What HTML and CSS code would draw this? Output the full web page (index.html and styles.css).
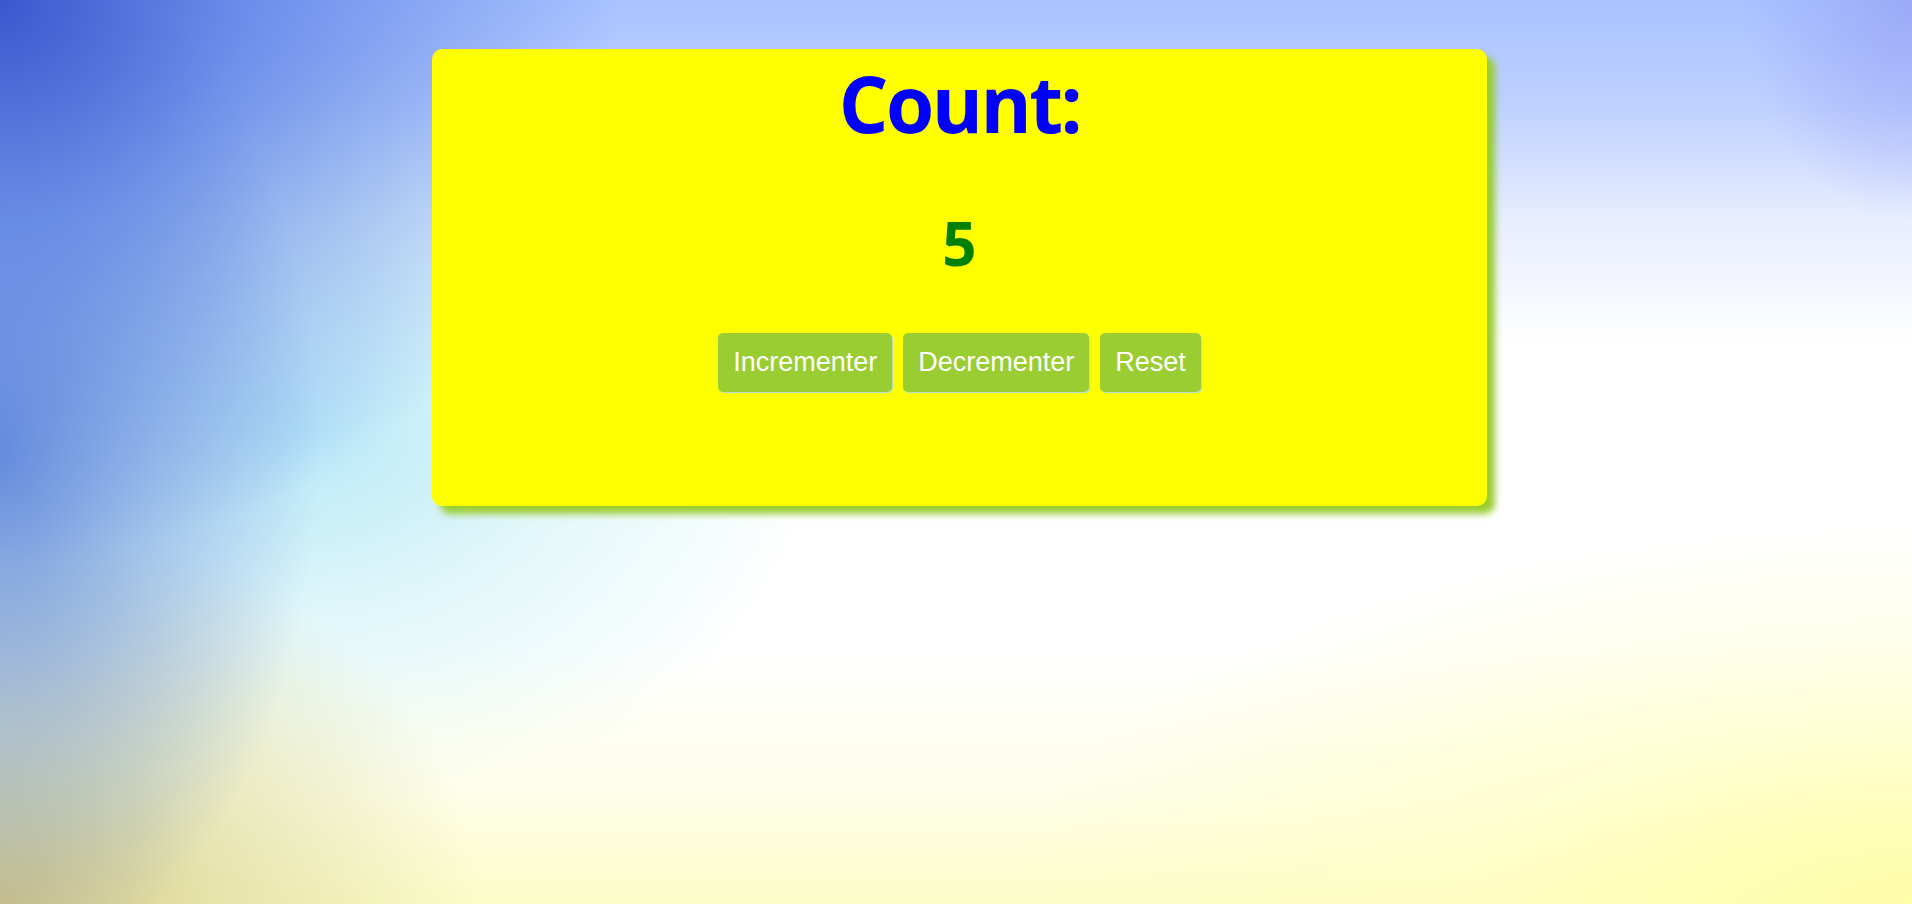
FILE: index.html
```html
<!DOCTYPE html>
<html lang="fr">
<head>
<meta charset="utf-8">
<title>Counter</title>
<link rel="stylesheet" href="styles.css">
</head>
<body>
<main class="card">
  <h1 class="title">Count:</h1>
  <p class="value">5</p>
  <div class="actions">
    <button class="btn">Incrementer</button>
    <button class="btn">Decrementer</button>
    <button class="btn">Reset</button>
  </div>
</main>
</body>
</html>
```

FILE: styles.css
```css
html, body {
  margin: 0;
  padding: 0;
}
body {
  min-height: 100vh;
  overflow: hidden;
  font-family: "Open Sans", "Noto Sans", sans-serif;
  background:
    radial-gradient(ellipse 620px 560px at 0% 0%, rgba(58, 88, 206, 1) 0%, rgba(80, 120, 226, 0.7) 40%, rgba(110, 150, 236, 0) 100%),
    radial-gradient(ellipse 320px 520px at 0% 50%, rgba(100, 140, 218, 0.95) 0%, rgba(110, 150, 220, 0.5) 50%, rgba(120, 160, 220, 0) 100%),
    radial-gradient(ellipse 480px 380px at 0% 100%, rgba(208, 194, 130, 1) 0%, rgba(215, 212, 150, 0.6) 45%, rgba(225, 225, 170, 0) 100%),
    radial-gradient(ellipse 900px 380px at 100% 100%, rgba(255, 255, 170, 1) 0%, rgba(255, 255, 190, 0.5) 50%, rgba(255, 255, 200, 0) 100%),
    linear-gradient(to top, rgba(252, 252, 190, 0.85) 0%, rgba(252, 252, 200, 0.4) 12%, rgba(255, 255, 230, 0) 28%),
    radial-gradient(ellipse 520px 380px at 300px 430px, rgba(184, 232, 248, 1) 0%, rgba(205, 242, 246, 0.6) 50%, rgba(225, 250, 244, 0) 100%),
    radial-gradient(ellipse 170px 220px at 100% 0%, rgba(150, 162, 246, 0.75) 0%, rgba(160, 175, 248, 0) 100%),
    linear-gradient(to bottom, #a9c2ff 0%, #bfd1ff 12%, rgba(215, 225, 255, 0.6) 24%, rgba(255, 255, 255, 0) 38%),
    #ffffff;
}
.card {
  box-sizing: border-box;
  width: 1055px;
  height: 457px;
  margin: 49px 0 0 calc(50% - 524px);
  padding-top: 1px;
  background: #ffff00;
  border-radius: 10px;
  box-shadow: 8px 8px 7px #9acd32;
  display: flex;
  flex-direction: column;
  align-items: center;
}
.title {
  margin: 0;
  font-size: 78px;
  font-weight: 700;
  color: #0000ff;
  line-height: normal;
  letter-spacing: -2.5px;
}
.value {
  margin: 46px 0 0;
  font-size: 60px;
  font-weight: 700;
  color: #008000;
  line-height: normal;
}
.actions {
  margin-top: 49px;
  display: flex;
  gap: 11px;
}
.btn {
  font-family: "Liberation Sans", Arial, sans-serif;
  font-size: 27px;
  line-height: normal;
  color: #ffffff;
  background: #9acd32;
  border: none;
  border-radius: 5px;
  padding: 14px 15px;
  box-shadow: 1px 1px 1px #b0dce8;
  cursor: pointer;
}
```
